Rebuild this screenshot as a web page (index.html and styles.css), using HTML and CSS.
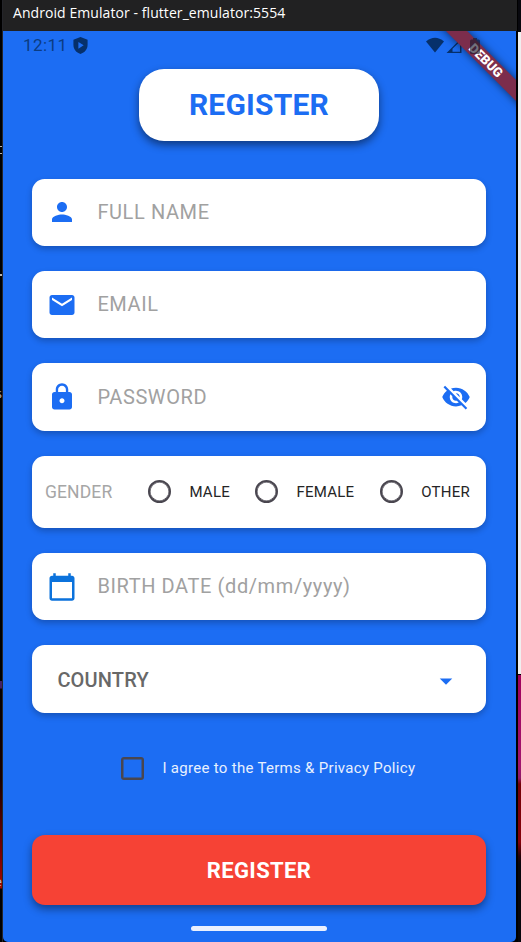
FILE: index.html
```html
<!DOCTYPE html>
<html lang="en">
<head>
<meta charset="utf-8">
<title>Android Emulator</title>
<link rel="stylesheet" href="styles.css">
</head>
<body>
<div class="desktop">
  <aside class="edge edge-left">
    <i class="tick tick-a"></i>
    <i class="tick tick-b"></i>
    <i class="tick tick-c"></i>
    <span class="peek peek-s">s</span>
    <span class="peek peek-e">e</span>
  </aside>
  <div class="window">
    <header class="titlebar"><span class="titletext">Android Emulator - flutter_emulator:5554</span></header>
    <main class="screen">
      <div class="statusbar">
        <span class="clock">12:11</span>
        <svg class="shield" viewBox="0 0 24 24"><path fill="#06306b" fill-rule="evenodd" d="M12 0 L22 4 V11 C22 17.500 18 22 12 24 C6 22 2 17.500 2 11 V4 Z M9 7 V16.500 L16.500 11.700 Z"/></svg>
        <svg class="signals" width="56" height="18" viewBox="0 0 56 18"><path fill="#06306b" d="M0 4.500 Q9 -3 18 4.500 L9 15.500 Z"/><path fill="#06306b" fill-rule="evenodd" d="M20.500 16 L35.500 1 V16 Z M26.500 11.800 V14.700 H34 V4.400 Z"/></svg>
      </div>
      <div class="banner"><span>DEBUG</span></div>
      <svg class="battery" viewBox="0 0 10 16"><path d="M3 0 H7 V1.500 H8.500 Q10 1.500 10 3 V14.500 Q10 16 8.500 16 H1.500 Q0 16 0 14.500 V3 Q0 1.500 1.500 1.500 H3 Z"/></svg>

      <h1 class="heading"><span>REGISTER</span></h1>

      <form class="form">
        <div class="card field">
          <svg class="icon" viewBox="0 0 24 24"><path d="M12 12c2.210 0 4-1.790 4-4s-1.790-4-4-4-4 1.790-4 4 1.790 4 4 4zm0 2c-2.670 0-8 1.340-8 4v2h16v-2c0-2.660-5.330-4-8-4z"/></svg>
          <span class="hint">FULL NAME</span>
        </div>
        <div class="card field">
          <svg class="icon" viewBox="0 0 24 24"><path d="M20 4H4c-1.100 0-1.990.9-1.990 2L2 18c0 1.100.9 2 2 2h16c1.100 0 2-.9 2-2V6c0-1.100-.9-2-2-2zm0 4l-8 5-8-5V6l8 5 8-5v2z"/></svg>
          <span class="hint">EMAIL</span>
        </div>
        <div class="card field">
          <svg class="icon" viewBox="0 0 24 24"><path d="M18 8h-1V6c0-2.760-2.240-5-5-5S7 3.240 7 6v2H6c-1.100 0-2 .9-2 2v10c0 1.100.9 2 2 2h12c1.100 0 2-.9 2-2V10c0-1.100-.9-2-2-2zm-6 9c-1.100 0-2-.9-2-2s.9-2 2-2 2 .9 2 2-.9 2-2 2zm3.100-9H8.900V6c0-1.710 1.390-3.100 3.100-3.100 1.710 0 3.100 1.390 3.100 3.100v2z"/></svg>
          <span class="hint">PASSWORD</span>
          <svg class="icon trailing" viewBox="0 0 24 24"><path d="M12 7c2.760 0 5 2.240 5 5 0 .65-.13 1.260-.36 1.830l2.920 2.920c1.510-1.260 2.700-2.890 3.430-4.750-1.730-4.390-6-7.500-11-7.500-1.400 0-2.740.25-3.980.7l2.160 2.160C10.740 7.130 11.350 7 12 7zM2 4.270l2.280 2.280.46.46C3.080 8.300 1.780 10.020 1 12c1.730 4.390 6 7.500 11 7.500 1.550 0 3.030-.3 4.380-.84l.42.42L19.730 22 21 20.730 3.270 3 2 4.270zM7.530 9.800l1.550 1.550c-.05.21-.08.43-.08.65 0 1.660 1.340 3 3 3 .22 0 .44-.03.65-.08l1.550 1.550c-.67.33-1.410.53-2.200.53-2.760 0-5-2.240-5-5 0-.79.2-1.530.53-2.200zm4.310-.78l3.150 3.150.02-.16c0-1.660-1.340-3-3-3l-.17.01z"/></svg>
        </div>
        <div class="card gender">
          <span class="gender-label">GENDER</span>
          <i class="radio"></i><span class="option male">MALE</span>
          <i class="radio"></i><span class="option female">FEMALE</span>
          <i class="radio"></i><span class="option other">OTHER</span>
        </div>
        <div class="card field">
          <svg class="icon calendar" viewBox="0 0 24 24"><path d="M20 3h-1V1h-2v2H7V1H5v2H4c-1.100 0-2 .9-2 2v16c0 1.100.9 2 2 2h16c1.100 0 2-.9 2-2V5c0-1.100-.9-2-2-2zm0 18H4V8h16v13z"/></svg>
          <span class="hint date">BIRTH DATE (dd/mm/yyyy)</span>
        </div>
        <div class="card country">
          <span class="country-label">COUNTRY</span>
          <svg class="icon caret" viewBox="0 0 24 24"><path d="M7 10l5 5 5-5z"/></svg>
        </div>
        <div class="terms"><i class="checkbox"></i><span class="terms-text">I agree to the Terms &amp; Privacy Policy</span></div>
        <div class="submit"><span>REGISTER</span></div>
      </form>
      <div class="homebar"></div>
    </main>
  </div>
  <aside class="edge edge-right"></aside>
</div>
</body>
</html>
```
FILE: styles.css
```css
* { box-sizing: border-box; }
body { margin: 0; background: #000; font-family: Roboto, sans-serif; }
.desktop { display: grid; grid-template-columns: 3px 514px 4px; height: 942px; overflow: hidden; }
.edge { position: relative; overflow: hidden; }
.edge-left { background: linear-gradient(#000 681px, #432064 681px, #432064 688px, #050001 689px, #180001 780px, #760000 850px, #a00a00 888px, #000 889px); border-right: 1px solid #24252a; }
.edge-right { margin-left: 1px; background: linear-gradient(#08080e 32px, #f0eff0 32px, #f0eff0 674px, #000 674px, #000 675px, #a0005c 675px, #a0146d 765px, #8e1868 778px, #740006 784px, #850009 842px, #260007 856px, #07060c 864px); }
.tick { position: absolute; left: 0; width: 2px; height: 1px; background: #b9b4ae; }
.tick-a { top: 146px; }
.tick-b { top: 153px; }
.tick-c { top: 274px; height: 2px; }
.peek { position: absolute; right: 0; color: #bbb; font: 13px/16px "Open Sans", sans-serif; }
.peek-s { top: 385px; }
.peek-e { top: 873px; }
.window { display: flex; flex-direction: column; }
.titlebar { height: 31px; padding-left: 10px; display: flex; align-items: center; background: #212122; color: #fff; }
.titletext { font: 14px/20px "Open Sans", sans-serif; letter-spacing: .07px; white-space: nowrap; margin-top: -5px; }
.screen { position: relative; width: 513px; height: 911px; overflow: hidden; background: #1c6df3; border-radius: 0 0 5px 5px; }
.statusbar { height: 38px; display: flex; align-items: flex-start; padding: 6px 0 0 20px; }
.clock { width: 44px; margin-right: 5px; margin-top: -1px; font-size: 17px; line-height: 18px; letter-spacing: .45px; color: #0b3c82; }
.shield { width: 17px; height: 17px; }
.signals { margin: 0 0 0 337px; }
.battery { position: absolute; left: 467px; top: 7px; width: 10px; height: 16px; fill: #1b1a2c; opacity: .62; }
.banner { position: absolute; left: 423px; top: 21.500px; width: 120px; height: 15px; transform: rotate(45deg); background: #7c2d4c; box-shadow: 0 0 8px rgba(0,0,0,.6); color: #fff; font-size: 13px; font-weight: 900; line-height: 15px; text-align: center; }
.heading { width: 240px; height: 72px; margin: 0 0 0 136px; border-radius: 25px; background: #fff; box-shadow: 0 4px 8px rgba(0,0,0,.48); display: flex; align-items: center; justify-content: center; font-size: 30px; font-weight: 700; line-height: 36px; letter-spacing: .2px; color: #1c6df3; }
.form { margin: 37.700px 0 0 29.400px; width: 453.300px; display: flex; flex-direction: column; gap: 24.800px; }
.card { height: 67.500px; flex: none; border-radius: 12.600px; background: #fff; box-shadow: 0 3px 6px rgba(0,0,0,.24); display: flex; align-items: center; white-space: nowrap; }
.field { padding-left: 15px; }
.icon { width: 30px; height: 30px; fill: #1c6df3; flex: none; }
.calendar { fill: #0b72dc; }
.hint { margin-left: 20px; margin-top: -1px; font-size: 20px; line-height: 24px; letter-spacing: .6px; color: #a1a1a1; }
.trailing { margin-left: auto; margin-right: 15px; }
.gender { height: 72.500px; padding-left: 12.500px; }
.gender-label { width: 103px; font-size: 17.500px; letter-spacing: .15px; color: #a6a6a6; }
.radio { width: 23px; height: 23px; border: 2px solid #49464f; box-shadow: inset 0 0 0 .5px #49464f; border-radius: 50%; flex: none; }
.option { margin-left: 18.500px; font-size: 15px; letter-spacing: .25px; color: #252526; }
.male { width: 65.500px; }
.female { width: 83.300px; }
.country { padding-left: 25px; }
.country-label { margin-top: 2px; font-size: 20px; font-weight: 500; letter-spacing: .15px; color: #686868; }
.caret { margin: 4px 25px 0 auto; }
.terms { height: 60px; display: flex; align-items: center; padding: 2px 0 0 89px; }
.checkbox { width: 23px; height: 23px; border: 2px solid #49464f; box-shadow: inset 0 0 0 .5px #49464f; border-radius: 3px; }
.terms-text { margin-left: 18px; font-size: 15px; letter-spacing: .3px; color: #e8f0fe; white-space: nowrap; }
.submit { height: 70px; margin-top: 12.500px; border-radius: 13px; background: #f64235; box-shadow: 0 4px 8px rgba(0,0,0,.42); display: flex; align-items: center; justify-content: center; color: #fff; font-size: 22px; font-weight: 700; letter-spacing: .35px; padding-top: 1px; }
.homebar { width: 136px; height: 5px; margin: 21px 0 0 188px; border-radius: 3px; background: #eaf0fe; }
```
